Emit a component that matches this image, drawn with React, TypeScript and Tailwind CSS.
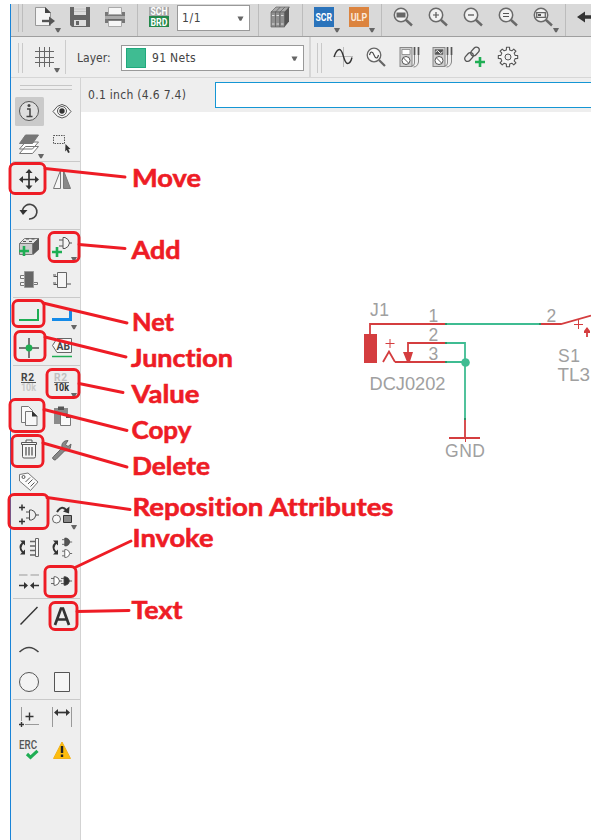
import type { ReactNode } from "react";

// Each icon cell is drawn in window coordinates; x and y are the cell's origin.
function Ico({ x, y, w, h, children }: { x: number; y: number; w: number; h: number; children?: ReactNode }) {
  return (
    <svg width={w} height={h} viewBox={`${x} ${y} ${w} ${h}`} className="block shrink-0 overflow-visible" fill="none">
      {children}
    </svg>
  );
}

const Top = ({ x, w, children }: { x: number; w: number; children?: ReactNode }) => (
  <Ico x={x} y={4} w={w} h={32}>{children}</Ico>
);
const Mid = ({ x, w, children }: { x: number; w: number; children?: ReactNode }) => (
  <Ico x={x} y={37} w={w} h={40}>{children}</Ico>
);
const Tool = ({ x, y, children }: { x: number; y: number; children?: ReactNode }) => (
  <Ico x={x} y={y} w={33} h={33}>{children}</Ico>
);

const Tri = ({ x, y }: { x: number; y: number }) => (
  <path d={`M${x - 3} ${y - 2}h6l-2.2 4.200h-1.600z`} fill="#666" />
);
const Plus = ({ x, y, r = 5, c = "#1fae54", sw = 2.6 }: { x: number; y: number; r?: number; c?: string; sw?: number }) => (
  <path d={`M${x - r} ${y}h${2 * r}M${x} ${y - r}v${2 * r}`} stroke={c} strokeWidth={sw} />
);
const Lens = ({ x, children }: { x: number; children?: ReactNode }) => (
  <g>
    <path d={`M${x + 4.5} 19.5l6.5 6`} stroke="#696969" strokeWidth="2.4" />
    <circle cx={x} cy="15" r="6.7" fill="#f2f2f2" stroke="#6a6a6a" strokeWidth="1.5" />
    {children}
  </g>
);
const Sep = () => <div className="w-px shrink-0 self-stretch bg-[#bcbcbc]" />;
const Rule = () => <div className="ml-0.5 mb-px h-px bg-[#c9c9c9]" />;
const Row = ({ children }: { children: ReactNode }) => <div className="ml-px flex h-[33px]">{children}</div>;

function TopBar() {
  return (
    <div className="flex h-[33px] items-start border-b border-[#9f9f9f] bg-[#d9d9d9]">
      <Top x={11} w={18}><path d="M18.5 4v28M22.5 4v28" stroke="#bcbcbc" /></Top>
      <Top x={29} w={35}>
        <path d="M35.5 7.5h10l5 5v13h-15z" fill="#f5f5f5" stroke="#999" />
        <path d="M45 7v6h6z" fill="#444" />
        <path d="M42 21h9" stroke="#555" strokeWidth="2.4" />
        <path d="M49 16.5l6 4.6-6 4.6z" fill="#555" />
        <Tri x={58} y={30} />
      </Top>
      <Top x={64} w={33}>
        <path d="M70 7h20v20H72l-2-2z" fill="#666" />
        <path d="M74 7h12v8H74zM74 20h12v6H74z" fill="#dedede" />
        <path d="M74 9h12M74 11.5h12" stroke="#c4c4c4" />
        <path d="M76 21h3v4h-3z" fill="#666" />
      </Top>
      <Top x={97} w={40}>
        <path d="M105 12h20v11h-20z" fill="#777" />
        <path d="M105 16h20v3h-20z" fill="#aaa" />
        <path d="M108.5 7.5h13v7h-13zM108.5 20.5h13v6h-13z" fill="#f6f6f6" stroke="#aaa" />
        <path d="M108 20h14" stroke="#555" />
      </Top>
      <Sep />
      <Top x={138} w={39}>
        <path d="M149 7h20v9h-20z" fill="#a8a8a8" />
        <path d="M149 16h20v11h-20z" fill="#24884a" />
        <g fill="#fff" fontFamily="Roboto, sans-serif" fontWeight="700" fontSize="10.5">
          <text x="150.5" y="15.3" textLength="17" lengthAdjust="spacingAndGlyphs">SCH</text>
          <text x="150.5" y="25.5" textLength="17" lengthAdjust="spacingAndGlyphs">BRD</text>
        </g>
      </Top>
      <div className="mt-px flex h-[26px] w-[73px] shrink-0 items-center justify-between border border-[#999] bg-white pl-1 pr-[5px]">
        <span className="tracking-[0.6px]">1/1</span>
        <Ico x={0} y={0} w={7} h={5}><Tri x={3.5} y={2.5} /></Ico>
      </div>
      <div className="w-2 shrink-0" />
      <Sep />
      <Top x={259} w={43}>
        {[271, 275.5, 280].map((x) => (
          <g key={x}>
            <path d={`M${x} 12l5-5h4.5l-4.5 5z`} fill="#aaa" stroke="#555" strokeWidth=".6" />
            <path d={`M${x} 12h4.5v15H${x}z`} fill="#909090" stroke="#5f5f5f" strokeWidth=".7" />
            <path d={`M${x + 1} 15.5h2.5M${x + 1} 24h2.5`} stroke="#ddd" />
          </g>
        ))}
        <path d="M284.5 12l4.500-5v14.5l-4.500 5.5z" fill="#555" />
      </Top>
      <Sep />
      <Top x={303} w={43}>
        <path d="M314 7h20v20h-20z" fill="#2a73bb" />
        <text x="315.5" y="20.8" fontSize="10.5" fontWeight="700" fontFamily="Roboto, sans-serif" fill="#fff" textLength="16.5" lengthAdjust="spacingAndGlyphs">SCR</text>
        <Tri x={337} y={30} />
      </Top>
      <Top x={346} w={35}>
        <path d="M349 7h20v20h-20z" fill="#dc843f" />
        <text x="350.7" y="20.8" fontSize="10.5" fontWeight="700" fontFamily="Roboto, sans-serif" fill="#fbe8d8" textLength="16.5" lengthAdjust="spacingAndGlyphs">ULP</text>
        <Tri x={372} y={30} />
      </Top>
      <Sep />
      <Top x={382} w={38}><Lens x={401}><path d="M396.500 12.500h9v5h-9z" fill="#666" /></Lens></Top>
      <Top x={420} w={35}><Lens x={436}><Plus x={436} y={15} r={3} c="#555" sw={1.2} /></Lens></Top>
      <Top x={455} w={35}><Lens x={471}><path d="M468 15h6" stroke="#555" strokeWidth="1.3" /></Lens></Top>
      <Top x={490} w={35}><Lens x={506}><path d="M503 13.5h6M503 16.5h6" stroke="#555" strokeWidth="1.2" /></Lens></Top>
      <Top x={525} w={40}>
        <Lens x={541}>
          <path d="M536.7 12.7h8.6v4.6h-8.6z" stroke="#666" strokeWidth="1.3" />
          <path d="M538 14h3v2h-3z" fill="#555" />
        </Lens>
        <Tri x={556} y={30} />
      </Top>
      <Sep />
      <Top x={566} w={25}>
        <path d="M577 17l8-5.500v3.800H592v3.400h-7v3.800z" fill="#333" />
      </Top>
    </div>
  );
}

function Meter({ x, dark }: { x: number; dark?: boolean }) {
  return (
    <g>
      <rect x={x} y="47.5" width="12" height="19" fill="#cfcfcf" stroke="#888" />
      <path d={`M${x + 2} 49.5h8v5h-8z`} fill={dark ? "#555" : "#fff"} stroke="#777" strokeWidth=".7" />
      {dark && <path d={`M${x + 2.5} 52q2-3 3.5 0t3.5 0`} stroke="#fff" />}
      <circle cx={x + 6} cy="60.5" r="4" fill="#fff" stroke="#555" />
      <path d={`M${x + 3.5} 58l5 5`} stroke="#555" />
      <path d={`M${x + 14.5} 47v8M${x + 18.5} 47v8`} stroke="#555" strokeWidth="1.700" />
      <path d={`M${x + 14.5} 55v8q0 3-3 3M${x + 18.5} 55v7q-1 5-5 5`} stroke="#888" />
    </g>
  );
}

// Outline of an eight-toothed gear.
function gearPath(cx: number, cy: number) {
  const steps: [number, number][] = [[-13, 7.3], [-9, 9.8], [9, 9.8], [13, 7.3]];
  const pts: string[] = [];
  for (let t = 0; t < 8; t++) {
    for (const [da, r] of steps) {
      const a = ((t * 45 + da) * Math.PI) / 180;
      pts.push(`${(cx + r * Math.cos(a)).toFixed(2)} ${(cy + r * Math.sin(a)).toFixed(2)}`);
    }
  }
  return `M${pts.join("L")}z`;
}

function LayerBar() {
  return (
    <div className="flex h-[41px] items-start border-b border-[#d6d6d6] bg-[#eee]">
      <Mid x={11} w={18}><path d="M18.5 43v30M22.5 43v30" stroke="#c9c9c9" /></Mid>
      <Mid x={29} w={36}>
        <path d="M39.500 47v20M44.500 47v20M49.500 47v20M35 51.5h19M35 57.500h19M35 62.5h19" stroke="#666" />
        <Tri x={57} y={70} />
      </Mid>
      <div className="mt-[3px] h-[34px] w-px shrink-0 bg-[#ccc]" />
      <span className="mt-[13px] w-[55px] shrink-0 pl-[11px]">Layer:</span>
      <div className="mt-2 flex h-[26px] w-[183px] shrink-0 items-center border border-[#999] bg-white pl-1 pr-[5px]">
        <div className="mr-1.5 h-5 w-5 border border-[#20a97d] bg-[#3fbc92]" />
        <span className="mt-px grow tracking-[0.3px]">91 Nets</span>
        <Ico x={0} y={0} w={7} h={5}><Tri x={3.5} y={2.5} /></Ico>
      </div>
      <div className="ml-[5px] mr-1 h-10 w-0.5 shrink-0 bg-[#d6d6d6]" />
      <Mid x={315} w={13}><path d="M317.5 43v30M321.5 43v30" stroke="#c9c9c9" /></Mid>
      <Mid x={328} w={33}>
        <path d="M334 56.5h19M343.5 47v20" stroke="#bbb" />
        <path d="M334 57c2-6 4-7.500 5.500-7.500 4 0 4 14 8 14 2 0 3.500-2 4.500-6" stroke="#333" strokeWidth="1.400" />
      </Mid>
      <Mid x={361} w={33}>
        <path d="M379 60l6 6" stroke="#666" strokeWidth="2.2" />
        <circle cx="374" cy="55" r="6.800" fill="#f7f7f7" stroke="#666" strokeWidth="1.3" />
        <path d="M369.500 55c1-4 3-4 4.500 0s3.500 4 4.500 0" stroke="#444" strokeWidth="1.1" />
      </Mid>
      <Mid x={394} w={33}><Meter x={400} /></Mid>
      <Mid x={427} w={33}><Meter x={433} dark /></Mid>
      <Mid x={460} w={32}>
        <g stroke="#555" strokeWidth="1.300">
          <rect x="-5" y="-2.900" width="10" height="5.800" rx="2.900" transform="translate(469 57) rotate(-48)" />
          <rect x="-5" y="-2.900" width="10" height="5.800" rx="2.900" transform="translate(475 51.500) rotate(-48)" />
        </g>
        <Plus x={480} y={62} />
      </Mid>
      <Mid x={492} w={33}>
        <path d={gearPath(508, 57)} fill="#f4f4f4" stroke="#555" strokeWidth="1.100" strokeLinejoin="round" />
        <circle cx="508" cy="57" r="3" fill="#eee" stroke="#555" />
      </Mid>
    </div>
  );
}

// Gate symbol with its left edge at x and its vertical centre at y.
function Gate({ x, y, s = 1, fill = "none" }: { x: number; y: number; s?: number; fill?: string }) {
  return (
    <g transform={`translate(${x} ${y}) scale(${s})`} stroke="#4a4a4a">
      <path d="M0-3h3.500M0 3h3.500M9.500 0h3.500" />
      <path d="M3.500-5h2Q9 -4.500 10 0 9 4.500 5.500 5h-2z" fill={fill} />
    </g>
  );
}

function Spin({ x, y }: { x: number; y: number }) {
  return (
    <g>
      <path d={`M${x + 2} ${y - 5}q-5 5 0 10`} stroke="#333" strokeWidth="2" />
      <path d={`M${x - 1} ${y - 7}h5v5zM${x - 1} ${y + 7}h5v-5z`} fill="#333" />
    </g>
  );
}

function Sidebar() {
  return (
    <div className="w-[70px] shrink-0 border-r border-[#d3d3d3] bg-[#eee]">
      <Ico x={11} y={78} w={69} h={17}><path d="M20 85.500h52M20 89.500h52" stroke="#c6c6c6" /></Ico>
      <Row>
        <Tool x={12} y={95}>
          <rect x="15" y="97" width="29" height="29" rx="1.500" fill="#cacaca" />
          <circle cx="29" cy="111" r="9.500" fill="#dedede" stroke="#555" />
          <path d="M27 109h3v7M26.500 116.500h6" stroke="#444" strokeWidth="1.500" />
          <circle cx="29" cy="105.500" r="1.500" fill="#444" />
        </Tool>
        <Tool x={45} y={95}>
          <path d="M53 111.500q9-14 18 0q-9 13-18 0z" fill="#f8f8f8" stroke="#555" />
          <circle cx="62" cy="111" r="4.500" stroke="#555" />
          <circle cx="62" cy="111" r="2.700" fill="#333" />
        </Tool>
      </Row>
      <Row>
        <Tool x={12} y={128}>
          <g stroke="#777" fill="#fff">
            <path d="M19.500 153.500l6-7h13l-6 7zM19.500 149l6-7h13l-6 7z" />
            <path d="M19.500 143.500l6-8.500h13l-6 8.500z" fill="#777" />
          </g>
          <Tri x={41} y={156} />
        </Tool>
        <Tool x={45} y={128}>
          <path d="M53.500 135.500h11v8h-11z" stroke="#555" strokeDasharray="1.500 1" />
          <path d="M65.500 144l5 5-2.200.2 1.500 3-1.700.8-1.400-3-1.500 1.500z" fill="#333" />
        </Tool>
      </Row>
      <Rule />
      <Row>
        <Tool x={12} y={163}>
          <path d="M21 179.500h16M29 171v17" stroke="#333" strokeWidth="1.700" />
          <path d="M29 169l3.500 4h-7zM29 189.500l3.500-4h-7zM19 179.500l4-3.500v7zM39 179.500l-4-3.500v7z" fill="#333" />
        </Tool>
        <Tool x={45} y={163}>
          <path d="M60.500 170.500v18h-7z" fill="#f7f7f7" stroke="#777" />
          <path d="M63.500 170.500v18h7z" fill="#888" stroke="#777" />
        </Tool>
      </Row>
      <Row>
        <Tool x={12} y={196}>
          <path d="M22.500 210a7.300 7.300 0 1 1 6.500 9" stroke="#444" strokeWidth="1.600" />
          <path d="M19.500 210h8l-4.500 5z" fill="#333" />
        </Tool>
      </Row>
      <Rule />
      <Row>
        <Tool x={12} y={231}>
          <path d="M19.500 243.500l5-5h14l-5 5z" fill="#e5e5e5" stroke="#777" />
          <path d="M19.500 243.500h13v11h-13z" fill="#ccc" stroke="#777" />
          <path d="M33 243.500l6-5.500v11.500l-6 5.500z" fill="#5b5b5b" />
          <path d="M23 241.500h3M29 241.500h3M26 239h3M31.500 239h3" stroke="#555" strokeWidth="1.200" />
          <Plus x={24} y={251} />
        </Tool>
        <Tool x={45} y={231}>
          <g transform="translate(58 243)" stroke="#555">
            <path d="M1-3h4M1 3h4M11 0h3" />
            <path d="M5-5.500h2Q11-4 11.500 0 11 4 7 5.500H5z" fill="#f5f5f5" />
          </g>
          <Plus x={57} y={252} />
          <Tri x={74} y={259} />
        </Tool>
      </Row>
      <Row>
        <Tool x={12} y={264}>
          <path d="M20.500 275.500h4v3h-4zM20.500 282.500h4v3h-4zM33.500 282.500h4v2h-4z" fill="#f5f5f5" stroke="#777" />
          <path d="M24.500 271.500h9v16h-9z" fill="#666" stroke="#999" />
        </Tool>
        <Tool x={45} y={264}>
          <path d="M53.500 276.500h4M53.500 284.500h4M67 284h4M53 275h3M53 283h3" stroke="#555" />
          <path d="M57.500 272.500h9v15h-9z" fill="#f5f5f5" stroke="#666" />
        </Tool>
      </Row>
      <Rule />
      <Row>
        <Tool x={12} y={299}><path d="M19 320h19V309" stroke="#1fae54" strokeWidth="2" /></Tool>
        <Tool x={45} y={299}>
          <path d="M52 319.500h18.500V310" stroke="#148ae8" strokeWidth="3" />
          <Tri x={74} y={327} />
        </Tool>
      </Row>
      <Row>
        <Tool x={12} y={332}>
          <path d="M19 348h20M29 338v20" stroke="#777" strokeWidth="2" />
          <circle cx="29" cy="348" r="3.400" fill="#1fae54" />
        </Tool>
        <Tool x={45} y={332}>
          <path d="M52.500 345.500l4.500-7h14.500v14H57z" fill="#f7f7f7" stroke="#666" />
          <text x="56.500" y="349.500" fontSize="10.500" fontWeight="700" fontFamily="Roboto, sans-serif" fill="#444" textLength="13.500" lengthAdjust="spacingAndGlyphs">AB</text>
          <path d="M52 356.500h20" stroke="#1fae54" strokeWidth="1.500" />
        </Tool>
      </Row>
      <Rule />
      <Row>
        <Tool x={12} y={367}>
          <g fontSize="10.200" fontWeight="700" fontFamily="Roboto, sans-serif">
            <text x="21" y="381" fill="#444" textLength="13">R2</text>
            <text x="21" y="391.200" fill="#c8c8c8" textLength="15" lengthAdjust="spacingAndGlyphs">10k</text>
          </g>
          <path d="M21 382.500h15" stroke="#555" />
        </Tool>
        <Tool x={45} y={367}>
          <g fontSize="10.200" fontWeight="700" fontFamily="Roboto, sans-serif">
            <text x="54" y="381" fill="#c0c0c0" textLength="13">R2</text>
            <text x="54" y="391.200" fill="#333" textLength="15" lengthAdjust="spacingAndGlyphs">10k</text>
          </g>
          <path d="M54 382.500h15" stroke="#777" />
          <Tri x={74} y={395} />
        </Tool>
      </Row>
      <Row>
        <Tool x={12} y={400}>
          <path d="M21.500 406.500h7l4 4v12h-11z" fill="#fafafa" stroke="#777" />
          <path d="M25.500 411.500h7l4.500 4.500v9.500h-11.500z" fill="#f7f7f7" stroke="#777" />
          <path d="M32 411v5.500h5.500z" fill="#333" />
        </Tool>
        <Tool x={45} y={400}>
          <path d="M54 408h14v16H54z" fill="#8b8b8b" />
          <path d="M58 406.500h6v3.500h-6z" fill="#555" />
          <path d="M60.500 413.500h6l4 4v8h-10z" fill="#fafafa" stroke="#777" />
          <path d="M66 413v5h5z" fill="#555" />
        </Tool>
      </Row>
      <Row>
        <Tool x={12} y={433}>
          <path d="M22.500 444.500h13v12q0 1.500-1.500 1.500h-10q-1.500 0-1.500-1.500zM21.500 442.500h15v2h-15zM26 442v-2h6v2" stroke="#555" fill="#f5f5f5" />
          <path d="M26 447v8.500M29 447v8.500M32 447v8.500" stroke="#555" strokeWidth="1.300" />
        </Tool>
        <Tool x={45} y={433}>
          <path d="M53.500 459.500q-2-1.500 0-3l8.500-8.500q-1-5 3-7l3-.5-2.500 4 2.500 2 3-2.500q0 5-3 6.500l-3.500.5-8.500 8.500q-1 1-2.500 0z" fill="#888" stroke="#666" />
        </Tool>
      </Row>
      <Row>
        <Tool x={12} y={466}>
          <path d="M19.500 474.500l8.500-1.500 10 9-7.500 8.500-11-9.500z" fill="#fafafa" stroke="#777" />
          <circle cx="23.500" cy="477" r="1.500" stroke="#555" />
          <path d="M25.500 482l4.500-4.500M28 484l4.500-4.500M30.500 486.500l4-4" stroke="#555" />
        </Tool>
      </Row>
      <Row>
        <Tool x={12} y={499}>
          <Plus x={22} y={507.500} r={3} c="#333" sw={1.500} />
          <Plus x={22} y={521.500} r={3} c="#333" sw={1.500} />
          <Gate x={26} y={515} />
        </Tool>
        <Tool x={45} y={499}>
          <path d="M57 512q5-8 10-1" stroke="#333" strokeWidth="2" />
          <path d="M69.500 506.500l-.5 7-6-2z" fill="#333" />
          <circle cx="56.500" cy="519" r="4" fill="#f7f7f7" stroke="#666" />
          <path d="M63.500 515.500h8v7h-8z" fill="#888" stroke="#333" />
          <Tri x={74} y={527} />
        </Tool>
      </Row>
      <Row>
        <Tool x={12} y={532}>
          <Spin x={21} y={547.500} />
          <path d="M30 541.500h5M30 546h5M30 550.500h5M30 555h5" stroke="#666" strokeWidth="1.300" />
          <path d="M35.500 538.500h3v18h-3z" fill="#f7f7f7" stroke="#666" />
        </Tool>
        <Tool x={45} y={532}>
          <Spin x={54} y={547.500} />
          <Gate x={62} y={542} s={0.78} fill="#555" />
          <Gate x={62} y={553.500} s={0.78} fill="#fff" />
        </Tool>
      </Row>
      <Row>
        <Tool x={12} y={565}>
          <path d="M19 575h8.500M30.500 575H39" stroke="#999" />
          <path d="M19 585.500h6M33 585.500h6" stroke="#333" strokeWidth="1.700" />
          <path d="M24 582l4 3.500-4 3.500zM34 582l-4 3.500 4 3.500z" fill="#333" />
        </Tool>
        <Tool x={45} y={565}>
          <Gate x={51} y={581} s={0.85} fill="#fff" />
          <Gate x={61} y={581} s={0.85} fill="#333" />
        </Tool>
      </Row>
      <Rule />
      <Row>
        <Tool x={12} y={600}><path d="M20.500 624.500L37.500 607" stroke="#333" strokeWidth="1.400" /></Tool>
        <Tool x={45} y={600}><path d="M55 625l6-16.500h2l6 16.500M57.500 619.500h9" stroke="#333" strokeWidth="2.700" /></Tool>
      </Row>
      <Row>
        <Tool x={12} y={633}><path d="M19.500 652q9.500-9 19 0" stroke="#444" strokeWidth="1.500" /></Tool>
      </Row>
      <Row>
        <Tool x={12} y={666}><circle cx="29" cy="682" r="9.500" fill="#f3f3f3" stroke="#555" /></Tool>
        <Tool x={45} y={666}><path d="M54.500 672.500h15v19h-15z" fill="#f5f5f5" stroke="#555" /></Tool>
      </Row>
      <Rule />
      <Row>
        <Tool x={12} y={701}>
          <path d="M21.500 707v14M25 724.500h14" stroke="#999" />
          <Plus x={29.500} y={716.500} r={4} c="#333" sw={1.400} />
          <Plus x={21.500} y={724.500} r={2.500} c="#333" sw={1.400} />
        </Tool>
        <Tool x={45} y={701}>
          <path d="M52.500 707v20M71.500 707v20" stroke="#999" />
          <path d="M56 712.500h12" stroke="#333" strokeWidth="1.700" />
          <path d="M54 712.500l4-3.500v7zM70 712.500l-4-3.500v7z" fill="#333" />
        </Tool>
      </Row>
      <Row>
        <Tool x={12} y={734}>
          <text x="19" y="749.300" fontSize="12" fontWeight="500" fontFamily="Roboto, sans-serif" fill="#555" textLength="18" lengthAdjust="spacingAndGlyphs">ERC</text>
          <path d="M27 754l3.500 3.300 7-6.500" stroke="#1fae54" strokeWidth="3.200" />
        </Tool>
        <Tool x={45} y={734}>
          <path d="M62 742l8.500 16.500h-17z" fill="#fdbd0d" stroke="#f2b21a" strokeLinejoin="round" />
          <path d="M62 746v7M62 754.500v2.500" stroke="#222" strokeWidth="2.400" />
        </Tool>
      </Row>
    </div>
  );
}

function Schematic() {
  return (
    <Ico x={81} y={112} w={510} h={728}>
      <g stroke="#d43d3f" strokeWidth="1.800">
        <path d="M370 335v-11h76M540 324h21l30-8.500M408 352v-9h38M395 362h51M383 362l6-10.500 6 10.500M465 419v19M449 438h31" />
        <path d="M385.500 343.500h9M390 339v9M574 324.500h9M578.500 320v9M465.500 438v4" strokeWidth="1" />
        <path d="M587 328v9" />
      </g>
      <path d="M364 334h13v29h-13zM403 352h10l-3.500 11h-2zM584 333v-2l3-4 3 4v2z" fill="#d43d3f" />
      <path d="M446 324h94M446 343h19v76M446 362h19" stroke="#3fbc92" strokeWidth="1.800" />
      <path d="M445 324h2M445 343h2M445 362h2M539 324h2M465 418v2" stroke="#2b9166" strokeWidth="2" />
      <circle cx="465.500" cy="362.500" r="4.300" fill="#3fbc92" />
      <g fill="#a0a0a0" fontSize="17.500" fontFamily="'Liberation Sans', Arial, sans-serif">
        <text x="370" y="315.500" textLength="19">J1</text>
        <text x="428.500" y="322">1</text>
        <text x="428.500" y="341">2</text>
        <text x="428.500" y="360">3</text>
        <text x="546.500" y="322">2</text>
        <text x="369.500" y="390" textLength="76" lengthAdjust="spacingAndGlyphs">DCJ0202</text>
        <text x="558" y="362" textLength="22">S1</text>
        <text x="557.500" y="381" textLength="32.500" lengthAdjust="spacingAndGlyphs">TL3</text>
        <text x="445" y="457" textLength="40">GND</text>
      </g>
    </Ico>
  );
}

const boxes = [
  [10, 163, 35, 30], [49, 232, 30, 29], [13, 300, 31, 26], [15, 331, 30, 29], [47, 369, 32, 28],
  [10, 399, 34, 32], [12, 435, 31, 31], [9, 494, 39, 34], [45, 566, 31, 30], [50, 602, 27, 27],
];
const leaders = [
  "M45 168.500l80 8.500", "M79 244.500l46 4", "M43 303l84 20", "M45 337l81 20", "M79 383.500l44 9",
  "M44 409.500l83 21", "M43 443l84 24", "M47 497.500l83 12", "M75 567.500l56-26.500", "M77 611.500l52-1",
];
const notes: [string, number, number, number][] = [
  ["Move", 132, 187, 69], ["Add", 131.500, 258.500, 49], ["Net", 132, 330.500, 42], ["Junction", 131, 366.500, 102],
  ["Value", 131.500, 402.500, 68], ["Copy", 131.500, 438.500, 60], ["Delete", 132, 474.500, 78],
  ["Reposition Attributes", 132.500, 515.500, 261], ["Invoke", 132.500, 547, 81], ["Text", 131.500, 618.500, 51],
];

function Annotations() {
  return (
    <svg className="pointer-events-none absolute left-0 top-0" width="607" height="840" fill="none">
      <g stroke="#ee1c25" strokeWidth="2.900" strokeLinecap="round">
        {boxes.map(([x, y, w, h]) => <rect key={y} x={x} y={y + 0.5} width={w} height={h} rx="5" />)}
        {leaders.map((d) => <path key={d} d={d} />)}
      </g>
      <g
        className="[font-variant-ligatures:none]"
        fill="#ee1c25"
        stroke="#ee1c25"
        strokeWidth="0.600"
        fontFamily="Lato, sans-serif"
        fontWeight="700"
        fontSize="25.500"
      >
        {notes.map(([t, x, y, w]) => (
          <text key={t} x={x} y={y} textLength={w} lengthAdjust="spacingAndGlyphs">{t}</text>
        ))}
      </g>
    </svg>
  );
}

export default function App() {
  return (
    <div className="relative h-[840px] w-[607px] overflow-hidden bg-white pl-2.5 pt-1 font-['DejaVu_Sans_Condensed','DejaVu_Sans',sans-serif] text-[12px] leading-[17px] text-[#444]">
      <div className="flex h-[836px] w-[581px] flex-col overflow-hidden border-l border-[#1883d7]">
        <TopBar />
        <LayerBar />
        <div className="flex grow">
          <Sidebar />
          <div className="flex min-w-0 grow flex-col">
            <div className="flex h-[34px] shrink-0 items-start bg-[#eee]">
              <span className="mt-[9px] w-[134px] shrink-0 whitespace-nowrap pl-[7px] tracking-[0.3px]">0.1 inch (4.6 7.4)</span>
              <div className="mt-1 h-[26px] grow border-y border-l border-[#1596d4] bg-white" />
            </div>
            <Schematic />
          </div>
        </div>
      </div>
      <Annotations />
    </div>
  );
}
